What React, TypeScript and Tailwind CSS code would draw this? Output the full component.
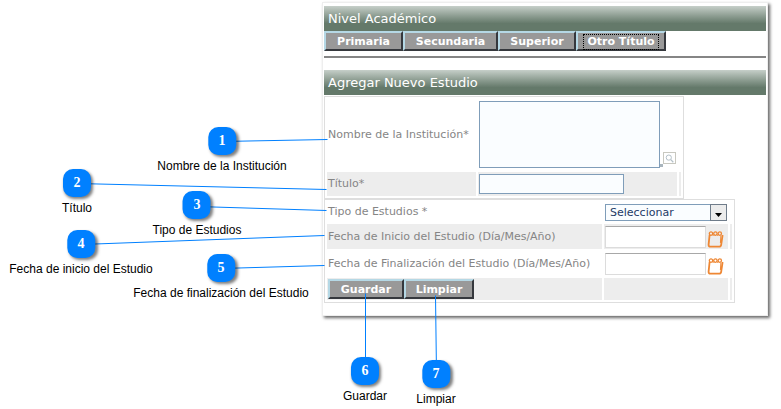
import { useState } from 'react';
import type { ReactNode } from 'react';
import { clsx } from 'clsx';

const NIVELES = [
  { label: 'Primaria', width: 'w-[79px]' },
  { label: 'Secundaria', width: 'w-[95px]' },
  { label: 'Superior', width: 'w-[78px]' },
  { label: 'Otro Título', width: 'w-[90px]' },
];

// x is the centre of the badge, y its top edge
const CALLOUTS = [
  { n: 1, label: 'Nombre de la Institución', pos: 'left-[222px] top-[127px]', line: [222, 141, 327, 139] },
  { n: 2, label: 'Título', pos: 'left-[77px] top-[169px]', line: [77, 183, 326, 189] },
  { n: 3, label: 'Tipo de Estudios', pos: 'left-[197px] top-[191px]', line: [197, 206, 326, 210] },
  { n: 4, label: 'Fecha de inicio del Estudio', pos: 'left-[81px] top-[230px]', line: [81, 244, 324, 235] },
  { n: 5, label: 'Fecha de finalización del Estudio', pos: 'left-[221px] top-[254px]', line: [221, 268, 324, 265] },
  { n: 6, label: 'Guardar', pos: 'left-[365px] top-[357px]', line: [365, 293, 365, 371] },
  { n: 7, label: 'Limpiar', pos: 'left-[436px] top-[360px]', line: [435, 295, 436, 374] },
];

function SectionTitle({ children }: { children: ReactNode }) {
  return (
    <h2 className="h-[25px] bg-linear-to-b from-[#c6cfc9] to-[#64796a] to-70% pl-1 text-[13px] leading-[25px] text-white">
      {children}
    </h2>
  );
}

function RaisedButton({ children, className, focused, onClick }: {
  children: ReactNode;
  className: string;
  focused?: boolean;
  onClick?: () => void;
}) {
  return (
    <button
      type="button"
      onClick={onClick}
      className={clsx(
        'h-5 border-2 border-t-[#b5d8e5] border-l-[#b5d8e5] border-r-[#35383d] border-b-[#35383d]',
        'bg-[#999999] pt-0.5 text-[11px] leading-3.5 font-bold whitespace-nowrap text-white',
        className
      )}
    >
      <span className={clsx('block', focused && 'mx-1.5 outline-1 outline-dotted outline-black')}>
        {children}
      </span>
    </button>
  );
}

function CalendarIcon() {
  return (
    <svg width="17" height="18" viewBox="0 0 17 18" fill="none" stroke="#ee8734" aria-hidden="true">
      <path d="M2.6 5 1.6 14.6Q1.5 16.6 3.2 16.6H12.2Q14 16.6 14.2 14.6L15.6 5" strokeWidth="1.8" />
      <path d="M13.9 5.5 13.4 13" strokeWidth="1" />
      <circle cx="4" cy="3.6" r="1.7" strokeWidth="1.3" />
      <circle cx="8.4" cy="3.6" r="1.7" strokeWidth="1.3" />
      <circle cx="12.8" cy="3.6" r="1.7" strokeWidth="1.3" />
      <path d="M5.6 5.2H6.8M10 5.2H11.2" strokeWidth="1.2" />
    </svg>
  );
}

function DateField({ id }: { id: string }) {
  return (
    <div className="flex items-center gap-px">
      <input
        id={id}
        type="text"
        className="h-[22px] w-[101px] border border-[#dcdcdc] border-t-[#a8a8a8] bg-white px-1 text-[11px]"
      />
      <button type="button" aria-label="Abrir calendario" className="mt-1">
        <CalendarIcon />
      </button>
    </div>
  );
}

export default function App() {
  const [nivel, setNivel] = useState('Otro Título');

  return (
    <div className="relative min-h-screen overflow-hidden bg-white pt-0.5 pr-[13px] pl-[322px] font-['DejaVu_Sans',sans-serif]">
      <main className="border border-[#eeeeee] bg-white px-px pt-[3px] pb-3 shadow-[2px_2px_3px_rgba(0,0,0,0.6)]">
        <SectionTitle>Nivel Académico</SectionTitle>
        <div className="flex border-b-2 border-[#858585] pb-[5px]">
          {NIVELES.map((item) => (
            <RaisedButton
              key={item.label}
              className={item.width}
              focused={nivel === item.label}
              onClick={() => setNivel(item.label)}
            >
              {item.label}
            </RaisedButton>
          ))}
        </div>

        <form className="pt-3 text-[11px] leading-4 text-[#858585]">
          <SectionTitle>Agregar Nuevo Estudio</SectionTitle>

          <table className="mt-px border-separate border-spacing-0.5 border border-[#dedede]">
            <tbody>
              <tr>
                <td className="h-[71px] w-[149px] px-px whitespace-nowrap">
                  <label htmlFor="institucion">Nombre de la Institución*</label>
                </td>
                <td className="w-[199px] px-px">
                  <div className="flex items-end">
                    <textarea
                      id="institucion"
                      className="block h-[67px] w-[181px] resize-none border border-[#7f9db9] bg-[#fafdff] p-1"
                    />
                    <span className="mb-px h-[3px] w-[3px] bg-[#a9b5bd]" />
                    <button
                      type="button"
                      aria-label="Ampliar"
                      className="mb-1 flex h-3 w-[13px] items-center justify-center border border-[#c8c8c0]"
                    >
                      <svg width="9" height="9" viewBox="0 0 9 9" fill="none" stroke="#b4c0c8" aria-hidden="true">
                        <circle cx="3.8" cy="3.6" r="2.6" />
                        <path d="M5.8 5.6 8.3 8.2" strokeWidth="1.3" />
                      </svg>
                    </button>
                  </div>
                </td>
                <td className="w-0.5" />
              </tr>
              <tr className="bg-[#ededed]">
                <td className="h-6 px-px">
                  <label htmlFor="titulo">Título*</label>
                </td>
                <td className="px-px">
                  <input
                    id="titulo"
                    type="text"
                    className="block h-5 w-[145px] border border-[#7f9db9] bg-[#fafdff] px-1"
                  />
                </td>
                <td />
              </tr>
            </tbody>
          </table>

          <table className="border-separate border-spacing-0.5 border border-[#dedede]">
            <tbody>
              <tr>
                <td className="h-5 w-[275px] px-px whitespace-nowrap">
                  <label htmlFor="tipo">Tipo de Estudios *</label>
                </td>
                <td className="w-[124px] px-px">
                  <div className="relative">
                    <select
                      id="tipo"
                      className="block h-[17px] w-full appearance-none border border-[#7f9db9] bg-[#fafdff] pl-1 text-[11px] leading-[15px] text-[#1d3a66]"
                    >
                      <option>Seleccionar</option>
                    </select>
                    <span className="pointer-events-none absolute inset-y-0 right-0 flex w-[17px] items-end justify-center border border-[#6f7c8a] bg-[#ececec] pb-[3px]">
                      <svg width="7" height="4" viewBox="0 0 7 4" aria-hidden="true">
                        <path d="M0 0H7L3.5 4Z" fill="#000" />
                      </svg>
                    </span>
                  </div>
                </td>
                <td className="w-0.5" />
              </tr>
              <tr className="bg-[#ededed]">
                <td className="h-[25px] px-px whitespace-nowrap">
                  <label htmlFor="inicio">Fecha de Inicio del Estudio (Día/Mes/Año)</label>
                </td>
                <td className="px-px">
                  <DateField id="inicio" />
                </td>
                <td />
              </tr>
              <tr>
                <td className="h-[25px] px-px whitespace-nowrap">
                  <label htmlFor="fin">Fecha de Finalización del Estudio (Día/Mes/Año)</label>
                </td>
                <td className="px-px">
                  <DateField id="fin" />
                </td>
                <td />
              </tr>
              <tr className="bg-[#ededed]">
                <td className="h-[22px] px-px">
                  <div className="flex">
                    <RaisedButton className="w-[76px]">Guardar</RaisedButton>
                    <RaisedButton className="w-[70px]">Limpiar</RaisedButton>
                  </div>
                </td>
                <td />
                <td />
              </tr>
            </tbody>
          </table>
        </form>
      </main>

      <svg className="pointer-events-none absolute top-0 left-0" width="781" height="409" aria-hidden="true">
        {CALLOUTS.map(({ n, line: [x1, y1, x2, y2] }) => (
          <line key={n} x1={x1 + 0.5} y1={y1 + 0.5} x2={x2 + 0.5} y2={y2 + 0.5} stroke="#0080ff" />
        ))}
      </svg>

      {CALLOUTS.map(({ n, label, pos }) => (
        <div key={n} className={clsx('absolute flex -translate-x-1/2 flex-col items-center gap-1', pos)}>
          <span className="flex size-7 items-center justify-center rounded-[10px] bg-[#0080ff] font-['Liberation_Serif',serif] text-sm font-bold text-white shadow-[2px_2px_3px_rgba(0,0,0,0.5)]">
            {n}
          </span>
          <span className="font-['Liberation_Sans',sans-serif] text-xs leading-3.5 whitespace-nowrap text-black">
            {label}
          </span>
        </div>
      ))}
    </div>
  );
}
